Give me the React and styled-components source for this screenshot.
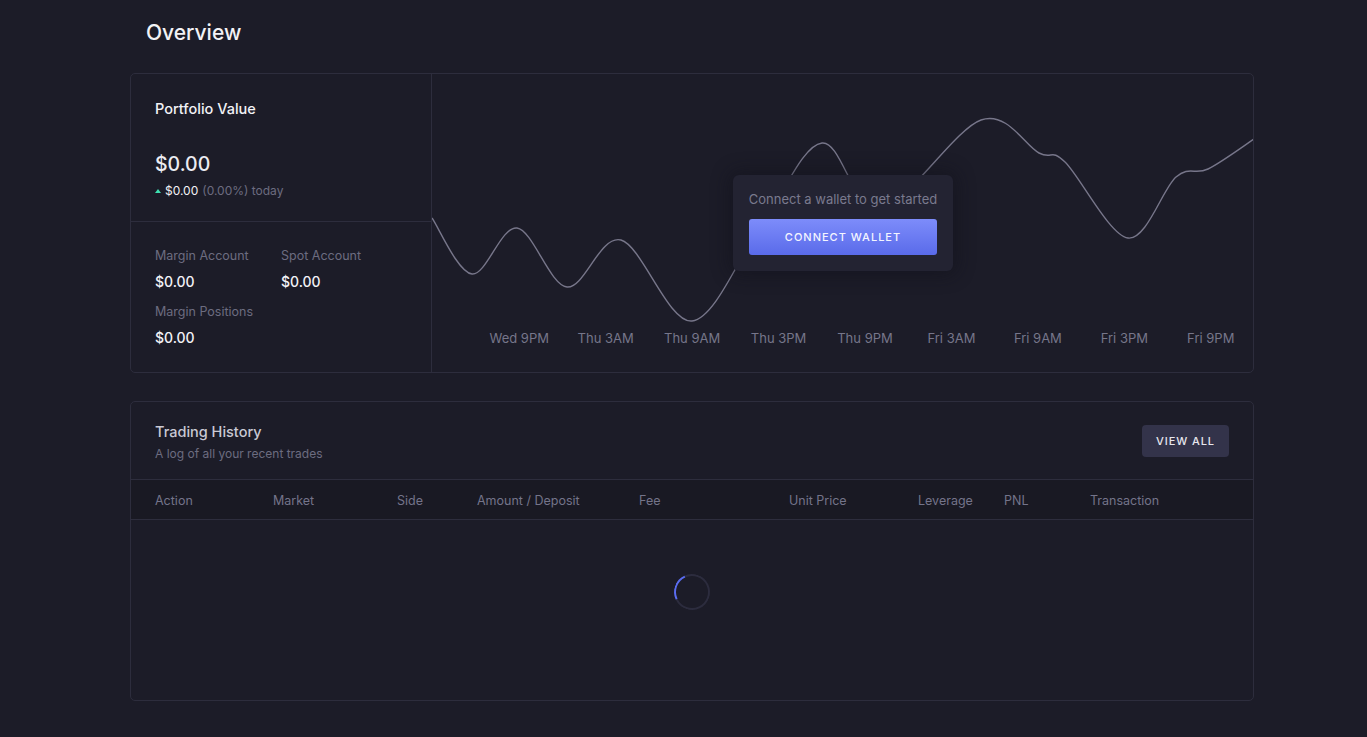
import React from "react";
import styled, { createGlobalStyle } from "styled-components";

const GlobalStyle = createGlobalStyle`
  html, body {
    margin: 0;
    padding: 0;
    background: #1c1c28;
    font-family: Inter, "Noto Sans", sans-serif;
    color: #ececf2;
  }
  * { box-sizing: border-box; }
`;

const Page = styled.div`
  width: 1124px;
  margin-left: 130px;
  padding-top: 18px;
  padding-bottom: 36px;
`;

const Title = styled.h1`
  margin: 0 0 25px 16px;
  font-size: 21px;
  font-weight: 500;
  line-height: 30px;
  color: #f2f2f6;
`;

const Card = styled.section`
  border: 1px solid #2d2d3d;
  border-radius: 5px;
  background: #1c1c28;
  margin-bottom: ${(p) => p.$gap || 0}px;
  overflow: hidden;
`;

const OverviewGrid = styled.div`
  display: grid;
  grid-template-columns: 301px 1fr;
  height: 298px;
`;

const Summary = styled.div`
  border-right: 1px solid #2d2d3d;
  display: flex;
  flex-direction: column;
`;

const SummaryTop = styled.div`
  height: 148px;
  padding: 25px 24px 0;
  border-bottom: 1px solid #2d2d3d;
`;

const CardTitle = styled.div`
  font-size: 14.5px;
  font-weight: 500;
  line-height: 20px;
  color: ${(p) => p.$color || "#f2f2f6"};
`;

const BigValue = styled.div`
  margin-top: 33px;
  font-size: 19.5px;
  font-weight: 500;
  line-height: 24px;
`;

const Change = styled.div`
  margin-top: 7px;
  display: flex;
  align-items: center;
  font-size: 12px;
  line-height: 16px;
  color: #f2f2f6;
  span { color: #6c6c80; margin-left: 4px; }
`;

const Up = styled.i`
  width: 0;
  height: 0;
  border-left: 3px solid transparent;
  border-right: 3px solid transparent;
  border-bottom: 4px solid #3ee0b0;
  margin-right: 4px;
`;

const Accounts = styled.div`
  display: grid;
  grid-template-columns: 126px 1fr;
  row-gap: 13px;
  padding: 26px 24px 0;
`;

const Stat = styled.div`
  display: flex;
  flex-direction: column;
  gap: 9px;
`;

const StatLabel = styled.div`
  font-size: 12.5px;
  line-height: 16px;
  color: #6c6c80;
`;

const StatValue = styled.div`
  font-size: 14px;
  font-weight: 500;
  line-height: 18px;
  color: #f2f2f6;
`;

const Chart = styled.div`
  display: grid;
  > * { grid-area: 1 / 1; }
`;

const Curve = styled.svg`
  width: 822px;
  height: 298px;
  display: block;
`;

const Axis = styled.div`
  align-self: end;
  display: grid;
  grid-template-columns: repeat(9, 1fr);
  padding: 0 0 26px 44px;
  font-size: 13px;
  line-height: 16px;
  color: #76768a;
  text-align: center;
`;

const Prompt = styled.div`
  place-self: center;
  width: 220px;
  padding: 16px;
  background: #232332;
  border-radius: 6px;
  box-shadow: 0 0 18px 4px rgba(16, 16, 24, 0.45);
  display: flex;
  flex-direction: column;
  align-items: center;
  gap: 12px;
`;

const PromptText = styled.div`
  font-size: 13px;
  line-height: 16px;
  color: #7a7a8e;
  white-space: nowrap;
`;

const PrimaryButton = styled.button`
  width: 188px;
  height: 36px;
  border: 0;
  border-radius: 3px;
  background: linear-gradient(180deg, #7d8cfa 0%, #5a6bea 100%);
  color: #f4f5ff;
  font-family: inherit;
  font-size: 11px;
  font-weight: 500;
  letter-spacing: 1px;
  cursor: pointer;
`;

const HistoryHead = styled.div`
  display: flex;
  justify-content: space-between;
  align-items: center;
  padding: 20px 24px 17px;
  border-bottom: 1px solid #2d2d3d;
`;

const Subtitle = styled.div`
  margin-top: 4px;
  font-size: 12px;
  line-height: 16px;
  color: #6c6c80;
`;

const GhostButton = styled.button`
  width: 87px;
  height: 32px;
  margin-top: -2px;
  border: 0;
  border-radius: 4px;
  background: #33334a;
  color: #e6e6ee;
  font-family: inherit;
  font-size: 11px;
  font-weight: 500;
  letter-spacing: 0.9px;
  cursor: pointer;
`;

const TableHead = styled.div`
  display: grid;
  grid-template-columns: 118px 124px 80px 162px 150px 129px 86px 86px 1fr;
  align-items: center;
  height: 40px;
  padding: 1px 24px 0;
  background: #191923;
  border-bottom: 1px solid #2d2d3d;
  font-size: 12.5px;
  color: #74748a;
`;

const Body = styled.div`
  height: 180px;
  display: flex;
  justify-content: center;
  padding-top: 54px;
`;

const Spinner = styled.div`
  width: 36px;
  height: 36px;
  border-radius: 50%;
  border: 2px solid #2c2c3e;
  border-left-color: #5a6cf0;
  transform: rotate(20deg);
`;

const points = [
  [0, 144], [40, 200], [85, 154], [135, 213], [189, 166], [260, 247],
  [330, 150], [390, 69], [448, 135], [549, 46], [607, 79], [633, 88],
  [696, 164], [744, 103], [776, 95], [822, 65],
];

// catmull-rom through the sample points
function smoothPath(pts) {
  let d = `M${pts[0][0]},${pts[0][1]}`;
  for (let i = 0; i < pts.length - 1; i++) {
    const p0 = pts[i - 1] || pts[i];
    const p1 = pts[i];
    const p2 = pts[i + 1];
    const p3 = pts[i + 2] || p2;
    const c1x = p1[0] + (p2[0] - p0[0]) / 6;
    const c1y = p1[1] + (p2[1] - p0[1]) / 6;
    const c2x = p2[0] - (p3[0] - p1[0]) / 6;
    const c2y = p2[1] - (p3[1] - p1[1]) / 6;
    d += ` C${c1x},${c1y} ${c2x},${c2y} ${p2[0]},${p2[1]}`;
  }
  return d;
}

const labels = [
  "Wed 9PM", "Thu 3AM", "Thu 9AM", "Thu 3PM", "Thu 9PM",
  "Fri 3AM", "Fri 9AM", "Fri 3PM", "Fri 9PM",
];

const columns = [
  "Action", "Market", "Side", "Amount / Deposit", "Fee",
  "Unit Price", "Leverage", "PNL", "Transaction",
];

export default function App() {
  return (
    <>
      <GlobalStyle />
      <Page>
        <Title>Overview</Title>

        <Card $gap={28}>
          <OverviewGrid>
            <Summary>
              <SummaryTop>
                <CardTitle>Portfolio Value</CardTitle>
                <BigValue>$0.00</BigValue>
                <Change>
                  <Up />
                  $0.00<span>(0.00%) today</span>
                </Change>
              </SummaryTop>
              <Accounts>
                <Stat>
                  <StatLabel>Margin Account</StatLabel>
                  <StatValue>$0.00</StatValue>
                </Stat>
                <Stat>
                  <StatLabel>Spot Account</StatLabel>
                  <StatValue>$0.00</StatValue>
                </Stat>
                <Stat>
                  <StatLabel>Margin Positions</StatLabel>
                  <StatValue>$0.00</StatValue>
                </Stat>
              </Accounts>
            </Summary>

            <Chart>
              <Curve viewBox="0 0 822 298">
                <path
                  d={smoothPath(points)}
                  fill="none"
                  stroke="#77768a"
                  strokeWidth="1.4"
                />
              </Curve>
              <Axis>
                {labels.map((l) => (
                  <span key={l}>{l}</span>
                ))}
              </Axis>
              <Prompt>
                <PromptText>Connect a wallet to get started</PromptText>
                <PrimaryButton>CONNECT WALLET</PrimaryButton>
              </Prompt>
            </Chart>
          </OverviewGrid>
        </Card>

        <Card>
          <HistoryHead>
            <div>
              <CardTitle $color="#c9c9d4">Trading History</CardTitle>
              <Subtitle>A log of all your recent trades</Subtitle>
            </div>
            <GhostButton>VIEW ALL</GhostButton>
          </HistoryHead>
          <TableHead>
            {columns.map((c) => (
              <div key={c}>{c}</div>
            ))}
          </TableHead>
          <Body>
            <Spinner />
          </Body>
        </Card>
      </Page>
    </>
  );
}
